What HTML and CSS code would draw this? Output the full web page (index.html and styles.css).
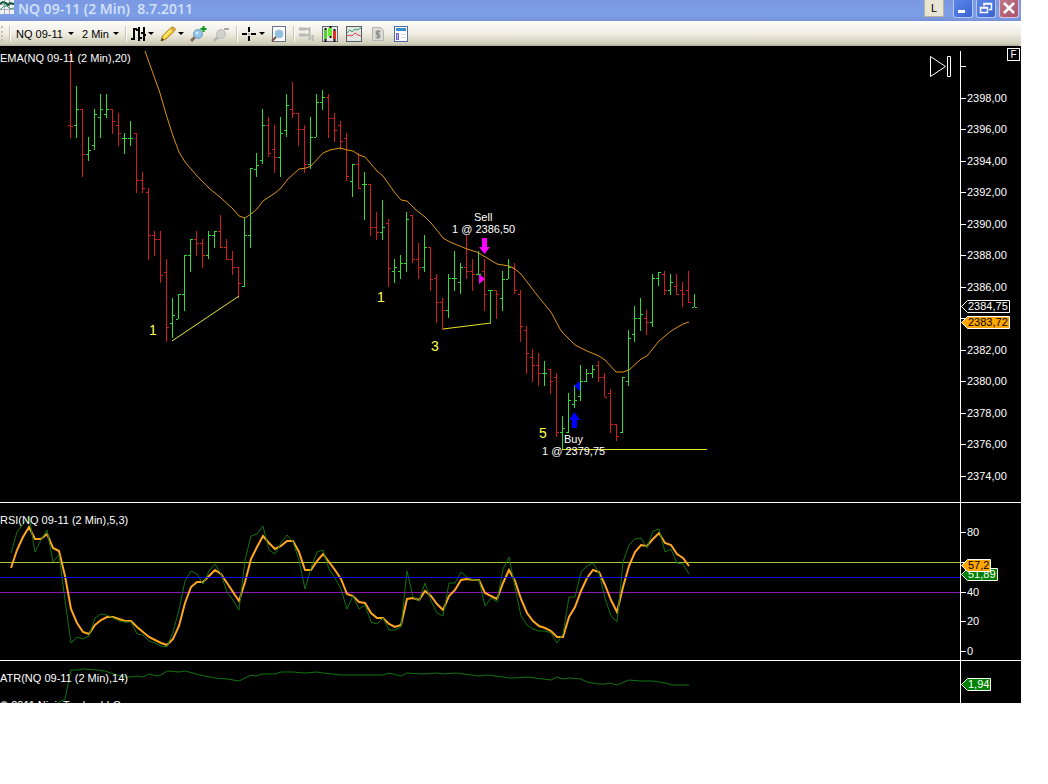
FILE: index.html
```html
<!DOCTYPE html>
<html lang="en">
<head>
    <meta charset="UTF-8">
    <meta name="viewport" content="width=device-width, initial-scale=1.0">
    <title>NQ 09-11 (2 Min) 8.7.2011</title>
    <link rel="stylesheet" href="styles.css">
</head>
<body>
    <div class="window">
        <header class="title-bar">
            <svg class="app-icon" width="14" height="14" viewBox="0 0 14 14">
                <rect width="14" height="14" fill="#eef2f0"/>
                <path d="M0 4.5h14M0 9.5h14M4.5 0v14M9.5 0v14" stroke="#b9a7bd"/>
                <path d="M0 4l3-2 3 1 2 2 2-2 4 1" fill="none" stroke="#0c5a3c" stroke-width="2"/>
                <path d="M0 10l4-4 3 0 3 3 4-1" fill="none" stroke="#2a9a6a"/>
            </svg>
            <h1 class="title">NQ 09-11 (2 Min)&nbsp; 8.7.2011</h1>
            <button class="link-button" type="button">L</button>
            <div class="window-buttons">
                <button class="win-button" type="button" aria-label="Minimize">
                    <svg width="18" height="18"><path d="M4 12.5h7" stroke="#fff" stroke-width="3"/></svg>
                </button>
                <button class="win-button" type="button" aria-label="Restore">
                    <svg width="18" height="18"><path d="M7 7V4.500h7.500v6H12M7 5h7M3.500 8.500h7v5h-7zM4 9h6" fill="none" stroke="#fff" stroke-width="1.500"/></svg>
                </button>
                <button class="win-button close" type="button" aria-label="Close">
                    <svg width="18" height="18"><path d="M4 4l10 10M14 4L4 14" stroke="#fff" stroke-width="2.500"/></svg>
                </button>
            </div>
        </header>

        <div class="toolbar">
            <span class="grip"></span>
            <span class="separator"></span>
            <label class="picker instrument">
                <select aria-label="Instrument"><option>NQ 09-11</option></select>
                <svg class="caret" width="6" height="4"><path d="M0 0h6L3 3z"/></svg>
            </label>
            <label class="picker period">
                <select aria-label="Period"><option>2 Min</option></select>
                <svg class="caret" width="6" height="4"><path d="M0 0h6L3 3z"/></svg>
            </label>
            <span class="separator"></span>
            <button class="tool" type="button" aria-label="Chart style">
                <svg width="16" height="16"><path d="M4 2v12M1 13h3M4 3h3M9 1v14M6 4h3M9 12h3M14 1v14M11 7h3M14 9h2" fill="none" stroke="#000" stroke-width="2"/></svg>
                <svg class="caret" width="6" height="4"><path d="M0 0h6L3 3z"/></svg>
            </button>
            <button class="tool wide" type="button" aria-label="Drawing tools">
                <svg width="16" height="16"><path d="M1 15l1.500-5L11 1.500q2-1 3.500.5t0 3L6 13z" fill="#f4d02c" stroke="#a8791c"/><path d="M4 11l8-8" stroke="#fff08c" stroke-width="1.500"/><path d="M11 2l3 3" stroke="#d8a04a" stroke-width="2"/><path d="M1 15l1-3 2 2z" fill="#333"/></svg>
                <svg class="caret" width="6" height="4"><path d="M0 0h6L3 3z"/></svg>
            </button>
            <button class="tool wide" type="button" aria-label="Zoom in">
                <svg width="17" height="16"><path d="M1 15l4-4" stroke="#8a6a5a" stroke-width="3"/><circle cx="8" cy="8" r="4.500" fill="#8fc4e8" stroke="#7d9fc0"/><circle cx="7" cy="7" r="1.500" fill="#d4ecfa"/><path d="M13.500 0v6M10.500 3h6" stroke="#0a9a20" stroke-width="2"/></svg>
            </button>
            <button class="tool wide" type="button" aria-label="Zoom out" disabled>
                <svg width="17" height="16"><path d="M1 15l4-4" stroke="#b4b4b0" stroke-width="3"/><circle cx="8" cy="8" r="4.500" fill="#d0d0cc" stroke="#bcbcb8"/><path d="M11 3h5" stroke="#a8a8a4" stroke-width="2"/></svg>
            </button>
            <span class="separator"></span>
            <button class="tool" type="button" aria-label="Cursor">
                <svg width="16" height="16"><path d="M1 8h5M10 8h5M8 1v5M8 10v5" stroke="#000" stroke-width="2"/><path d="M7.500 8h1" stroke="#000"/></svg>
                <svg class="caret" width="6" height="4"><path d="M0 0h6L3 3z"/></svg>
            </button>
            <button class="tool wide" type="button" aria-label="Data box">
                <svg width="16" height="16"><rect x="1.500" y=".5" width="13" height="15" fill="#fafafa" stroke="#6b7686"/><circle cx="8" cy="8" r="4" fill="#8fc0e4" stroke="#a9c4dc"/><path d="M1 15l4-4" stroke="#7a5040" stroke-width="2"/></svg>
            </button>
            <span class="separator"></span>
            <button class="tool" type="button" aria-label="Chart trader" disabled>
                <svg width="16" height="16"><path d="M1 3h7M1 9h7" stroke="#b8b8b4" stroke-width="3"/><path d="M8 3h3M8 9h3M14.500 9v6M11.500 1v13" stroke="#b8b8b4" stroke-width="2"/></svg>
            </button>
            <button class="tool spaced" type="button" aria-label="Data series">
                <svg width="16" height="16"><rect x=".5" y=".5" width="15" height="15" fill="#e8e8e4" stroke="#667"/><path d="M3.500 2v14M8.500 0v12M12.500 3v13" stroke="#111" stroke-width="2"/><path d="M2 4h3v9H2z" fill="#4ed32a"/><path d="M6 2h4v8H6z" fill="#6ae838"/><path d="M11 5h3v8h-3z" fill="#e03020"/></svg>
            </button>
            <button class="tool spaced" type="button" aria-label="Indicators">
                <svg width="16" height="16"><rect x=".5" y=".5" width="15" height="15" fill="#e2e6e2" stroke="#556068"/><path d="M1 7l3-3 2 2 3-3 2 1 4-2" fill="none" stroke="#3aa070"/><path d="M1 10l3-1 2 1 3-3 3 2 3 1" fill="none" stroke="#e04048"/></svg>
            </button>
            <button class="tool spaced" type="button" aria-label="Strategies" disabled>
                <svg width="16" height="16"><path d="M2.500 1.500h8l3 3v10h-11z" fill="#dcdcd8" stroke="#b4b4b0"/><path d="M10.500 5.500h-4v3h3v3h-4M8 4v9" fill="none" stroke="#94948f" stroke-width="1.500"/></svg>
            </button>
            <button class="tool spaced" type="button" aria-label="Properties">
                <svg width="16" height="16"><rect x=".5" y=".5" width="13" height="15" fill="#fff" stroke="#4c6ea0"/><path d="M2 3.500h10" stroke="#3f8ccc" stroke-width="3"/><rect x="2.500" y="7.500" width="2" height="6" fill="#b8b0f8" stroke="#7064d8"/><path d="M7 8.500h5M7 11.500h5" stroke="#d8d8d8"/></svg>
            </button>
        </div>

        <main class="chart">
            <section class="panel price">
                <h2 class="panel-label">EMA(NQ 09-11 (2 Min),20)</h2>
                <svg class="plot" id="price-plot"></svg>
                <svg class="axis" id="price-axis"></svg>
                <button class="go-last" type="button" aria-label="Go to last bar">
                    <svg width="22" height="22"><path d="M.5 .5v20l15-10zM17.500 .5h3v20h-3z" fill="none" stroke="#fff"/></svg>
                </button>
                <button class="fixed-scale" type="button">F</button>
            </section>
            <section class="panel rsi">
                <h2 class="panel-label">RSI(NQ 09-11 (2 Min),5,3)</h2>
                <svg class="plot" id="rsi-plot"></svg>
                <svg class="axis" id="rsi-axis"></svg>
            </section>
            <section class="panel atr">
                <h2 class="panel-label">ATR(NQ 09-11 (2 Min),14)</h2>
                <svg class="plot" id="atr-plot"></svg>
                <svg class="axis" id="atr-axis"></svg>
                <p class="copyright">© 2011 NinjaTrader, LLC</p>
            </section>
        </main>
    </div>
    <script src="chart.js"></script>
</body>
</html>
```

FILE: styles.css
```css
body {
    margin: 0;
    background: #fff;
    font-family: "Liberation Sans", Arial, sans-serif;
    font-size: 11px;
}
button {
    padding: 0;
    border: 0;
    background: none;
    font: inherit;
}
.window {
    margin-right: 27px;
}

/* title bar */
.title-bar {
    display: flex;
    align-items: flex-start;
    height: 21px;
    overflow: hidden;
    background: linear-gradient(#7b98e2, #7c9fe6 70%, #7690da);
}
.title {
    flex: 1;
    margin: 0 0 0 4px;
    color: #d5e2fb;
    font: 600 14px/17px "Open Sans", sans-serif;
}
.link-button {
    width: 20px;
    height: 17px;
    margin-right: 9px;
    border: 1px solid #b8b49c;
    border-top: 0;
    background: #e9e5d6;
    color: #000;
}
.window-buttons {
    display: flex;
    gap: 3px;
    margin-right: 2px;
}
.win-button {
    width: 20px;
    height: 18px;
    overflow: hidden;
    border: 1px solid #b4c6f4;
    border-top: 0;
    border-radius: 0 0 3px 3px;
    background: linear-gradient(135deg, #5c86e8, #3a63d2);
}
.win-button.close {
    border-color: #dcc0d4;
    background: linear-gradient(135deg, #c07888, #a85068);
}
.win-button svg {
    display: block;
    margin-top: -1px;
}

/* toolbar */
.toolbar {
    display: flex;
    align-items: center;
    height: 25px;
    background: linear-gradient(#fdfdfb, #efede2 50%, #cfccb8 92%, #a9a893);
    border-radius: 0 3px 3px 0;
}
.grip {
    width: 3px;
    height: 15px;
    border-right: 2px dotted #c4c0ac;
    box-sizing: border-box;
}
.separator {
    width: 1px;
    height: 16px;
    margin: 0 3px 0 6px;
    background: #c9c6b6;
    border-right: 1px solid #fff;
}
.picker {
    display: flex;
    align-items: center;
}
.picker select {
    appearance: none;
    width: 52px;
    padding: 0;
    border: 0;
    background: none;
    color: #000;
    font: inherit;
}
.picker.instrument {
    margin-left: 2px;
}
.picker.period {
    margin-left: 8px;
}
.picker.period select {
    width: 31px;
}
.tool {
    display: flex;
    align-items: center;
    gap: 2px;
}
.tool.wide {
    margin-left: 6px;
}
.tool.spaced {
    margin-left: 8px;
}

/* chart */
.chart {
    background: #000;
    color: #fff;
}
.panel {
    position: relative;
    display: flex;
    overflow: hidden;
    border-bottom: 1px solid #fff;
}
.panel.price {
    height: 456px;
}
.panel.rsi {
    height: 157px;
}
.panel.atr {
    height: 42px;
    border-bottom: 0;
}
.plot {
    flex: 1;
    min-width: 0;
    height: 100%;
}
.axis {
    flex: none;
    width: 61px;
    height: 100%;
}
.panel-label {
    position: absolute;
    top: 11px;
    left: 0;
    margin: 0;
    font-size: 11px;
    font-weight: normal;
    line-height: 13px;
}
.price .panel-label {
    top: 6px;
}
.go-last {
    position: absolute;
    top: 10px;
    right: 69px;
    height: 22px;
}
.fixed-scale {
    position: absolute;
    top: 2px;
    right: 1px;
    width: 13px;
    height: 13px;
    border: 1px solid #fff;
    color: #fff;
    font-size: 10px;
    line-height: 11px;
}
.copyright {
    position: absolute;
    top: 38px;
    left: 0;
    margin: 0;
    line-height: 13px;
}

.bar {
    fill: none;
    shape-rendering: crispEdges;
}
.up {
    stroke: #2fdc2f;
}
.down {
    stroke: #d01c1c;
}
.ema {
    fill: none;
    stroke: #dc9614;
}
.trend {
    stroke: #e6e62c;
}
.wave {
    fill: #ffff50;
    font-size: 14px;
}
.order {
    fill: #fff;
}
.sell {
    fill: #ff00ff;
}
.buy {
    fill: #0000ff;
}
.rsi-fast, .atr-line {
    fill: none;
    stroke: #107410;
}
.rsi-slow {
    fill: none;
    stroke: #ffa51e;
    stroke-width: 2;
}
.level, .axis-line {
    shape-rendering: crispEdges;
}
.level.high {
    stroke: #a2c83c;
}
.level.mid {
    stroke: #1010dc;
}
.level.low {
    stroke: #8c14b4;
}
.axis-line {
    fill: none;
    stroke: #fff;
}
.axis-text {
    fill: #fff;
}
.tag {
    stroke: #fff;
}
.tag.last {
    fill: #000;
}
.tag.orange {
    fill: #ffa500;
}
.tag.green {
    fill: #008000;
}
.tag-text {
    fill: #fff;
}
.tag-text.orange {
    fill: #000;
}
```

FILE: chart.js
```js
// values are stored in thirds of a pixel, measured from the top of the panel
var UNIT = 3;
var BAR_STEP = 6;

// each group: offset added to every value, then [high, low, open, close]
var barGroups = [
    { offset: 0, bars: [
        [15,275,238,238.5],[120,275,238,190],[190,392,190,323],[273,344,323,311],[190,311,297,203],
        [144,275,214,190],[144,215,203,190],[190,263,190,226],[201,299,238,262],[262,323,275,275],
        [226,299,275,275],[262,440,262,403],[378,440,403,427],[427,641,439,568],[556,629,568,580],
        [556,710,580,686],[640,887,677,842],[757,875,830,806],[745,818,818,745],[628,794,745,628],
        [580,677,628,580],[556,629,580,592],[580,665,592,628],[556,640,628,568],[556,605,568,556],
        [507,605,556,604],[580,641,604,640],[616,686,640,664],[663,757,663,710],[517,722,721,568],
        [367,605,568,367]
    ] },
    { offset: 72, bars: [
        [250,320,296,284],[117,283,271,166],[142,260,166,250],[165,310,238,260],[142,320,260,190],
        [72,202,179,106],[35,143,118,130],[129,227,130,178],[165,308,178,283],[142,297,283,202],
        [72,202,202,95],[60,119,95,82],[72,203,82,143],[129,215,143,179],[153,239,166,214],
        [189,332,203,319],[283,380,332,283],[250,356,283,355],[307,450,343,343],[343,497,343,472],
        [427,509,472,485],[391,509,485,472],[447,650,460,593],[567,638,604,592],[556,626,604,580],
        [427,605,580,448],[436,580,436,568],[518,626,568,592],[495,605,592,532],[532,662,532,626]
    ] },
    { offset: 462, bars: [
        [222,368,235,307],[295,390,307,331],[222,355,331,235],[153,272,235,235],[188,283,247,202],
        [105,236,202,213],[177,272,213,222],[153,224,222,222],[177,332,213,283],[271,370,271,271],
        [271,357,271,283],[213,332,295,236],[177,236,236,200]
    ] },
    { offset: 612, bars: [
        [38,133,50,121],[120,276,133,229],[228,371,240,310],[297,395,322,346],[310,407,346,370],
        [333,407,370,370],[357,431,357,394],[370,560,382,547],[498,597,547,535],[430,548,547,451],
        [406,475,463,451],[345,452,439,394],[357,395,394,370],[345,383,370,357],[333,395,346,382],
        [370,440,382,440],[417,548,430,523],[523,573,523,559],[382,548,547,382],[240,407,394,263],
        [168,276,253,205],[144,243,205,193],[179,254,205,217],[72,230,217,85],[65,109,85,65],
        [64,134,73,121],[72,134,121,97],[72,134,109,133],[97,170,121,133],[64,158,121,157],
        [132,170,170,170]
    ] }
];

var rsiSlow = [
    203,150,110,80,118,118,103,145,153,228,328,370,396,401,376,361,351,351,358,364,
    364,382,396,410,419,428,434,418,377,310,261,245,246,229,211,221,249,275,303,245,
    178,141,109,130,146,139,122,124,155,209,209,182,163,185,210,238,283,288,306,310,
    338,354,354,373,382,376,296,294,299,274,288,313,329,289,271,241,236,240,240,278,
    288,296,250,209,243,298,338,363,377,385,394,412,410,350,322,272,234,211,217,256,
    301,337,262,198,156,136,139,116,100,130,136,163,174,199
];
var rsiFast = [
    158,95,72,48,157,120,90,187,165,300,430,410,416,408,354,343,344,353,364,367,
    367,402,406,424,429,437,442,395,330,243,214,223,252,212,193,223,276,300,330,180,
    107,103,79,151,163,130,104,125,180,266,205,156,150,206,235,268,328,289,328,315,
    367,371,355,391,391,380,213,290,303,249,302,338,347,250,249,215,230,240,240,317,
    294,306,208,171,262,347,376,386,393,394,399,430,403,292,291,217,199,188,218,295,
    348,365,185,135,118,113,143,94,87,156,147,190,191,223
];

var ema = "145,5 160,47 166,68 173,90 179,106 185,116 197,130 209,142 221,152 233,163 239,170 " +
    "245,172 251,168 257,163 263,155 275,147 281,142 287,134 299,123 306,122 311,120 323,107 " +
    "330,104 340,102 347,104 353,105 359,109 365,111 377,125 383,130 395,147 401,154 407,155 " +
    "415,163 425,171 431,177 440,188 443,192 450,196 467,203 477,206 487,212 497,218 509,220 " +
    "515,223 521,228 537,249 551,266 560,283 563,287 575,299 587,305 599,310 605,314 616,326 " +
    "623,326 629,324 641,313 647,310 659,295 671,285 683,278 689,276";

var atr = "58,42 65,38 71,9 77,9 83,8 97,9 105,10 117,14 125,16 131,16 137,15 143,16 149,13 " +
    "157,15 161,14 167,10 179,11 185,10 200,14 215,17 227,18 239,20 251,14 256,15 262,13 275,13 " +
    "281,11 293,11 305,12 317,11 323,12 341,14 370,14 383,14 389,12 401,15 407,12 423,13 437,12 " +
    "443,13 455,12 479,15 487,14 503,16 509,17 515,17 527,16 551,19 557,16 563,18 569,17 581,18 " +
    "587,21 599,23 605,23 610,22 617,24 629,19 640,20 653,20 665,22 673,24 689,24";

function line(x1, y1, x2, y2, cls) {
    return `<line x1="${x1}" y1="${y1}" x2="${x2}" y2="${y2}" class="${cls}"/>`;
}

function text(x, y, value, cls) {
    return `<text x="${x}" y="${y}" class="${cls}">${value}</text>`;
}

function polyline(points, cls) {
    return `<polyline points="${points}" class="${cls}"/>`;
}

function drawBars() {
    var out = "";
    var x = 70;
    barGroups.forEach(function(group) {
        group.bars.forEach(function(bar) {
            var y = bar.map(function(v) {
                return Math.round((v + group.offset) / UNIT);
            });
            var cls = bar[3] <= bar[2] ? "up" : "down";
            out += `<path class="bar ${cls}" d="M${x + 0.5} ${y[0]}V${y[1]}M${x - 2} ${y[2] + 0.5}H${x}M${x + 1} ${y[3] + 0.5}H${x + 3}"/>`;
            x += BAR_STEP;
        });
    });
    return out;
}

function seriesPoints(values) {
    return values.map(function(v, i) {
        return (11 + i * BAR_STEP) + "," + Math.round(v / UNIT - 3);
    }).join(" ");
}

function axisTicks(ticks) {
    return ticks.map(function(t) {
        return line(1, t[0] + 0.5, 6, t[0] + 0.5, "axis-line") + text(7, t[0] + 4, t[1], "axis-text");
    }).join("");
}

function tag(y, width, value, color) {
    return `<path class="tag ${color}" d="M1.5 ${y + 0.5}l6-6H${width + 0.5}v12H7.5z"/>` +
        text(8, y + 4, value, "tag-text " + color);
}

document.getElementById("price-plot").innerHTML =
    drawBars() +
    polyline(ema, "ema") +
    line(172, 295, 239, 250, "trend") +
    line(443, 283, 491, 277, "trend") +
    line(562, 403.5, 707, 403.5, "trend") +
    text(149, 289, "1", "wave") +
    text(377, 256, "1", "wave") +
    text(431, 305, "3", "wave") +
    text(539, 392, "5", "wave") +
    text(474, 175, "Sell", "order") +
    text(452, 187, "1 @ 2386,50", "order") +
    text(564, 397, "Buy", "order") +
    text(542, 409, "1 @ 2379,75", "order") +
    '<path class="sell" d="M482 192h5v9h3l-5.500 7-5.500-7h3zM479 228l6 5-6 5z"/>' +
    '<path class="buy" d="M572 382h5v-8h3l-5.500-8-5.500 8h3zM580 335l-6 5 6 5z"/>';

document.getElementById("price-axis").innerHTML =
    line(0.5, 5, 0.5, 456, "axis-line") +
    axisTicks([
        [20, ""], [52, "2398,00"], [83, "2396,00"], [115, "2394,00"], [146, "2392,00"],
        [178, "2390,00"], [209, "2388,00"], [241, "2386,00"], [272, ""], [304, "2382,00"],
        [335, "2380,00"], [367, "2378,00"], [398, "2376,00"], [430, "2374,00"]
    ]) +
    tag(260, 49, "2384,75", "last") +
    tag(276, 49, "2383,72", "orange");

document.getElementById("rsi-plot").innerHTML =
    line(0, 59.5, "100%", 59.5, "level high") +
    line(0, 89.5, "100%", 89.5, "level low") +
    polyline(seriesPoints(rsiSlow), "rsi-slow") +
    polyline(seriesPoints(rsiFast), "rsi-fast") +
    line(0, 74.5, "100%", 74.5, "level mid");

document.getElementById("rsi-axis").innerHTML =
    line(0.5, 0, 0.5, 157, "axis-line") +
    axisTicks([[29, "80"], [59, ""], [89, "40"], [118, "20"], [148, "0"]]) +
    tag(71, 37, "51,89", "green") +
    tag(62, 30, "57,2", "orange");

document.getElementById("atr-plot").innerHTML = polyline(atr, "atr-line");

document.getElementById("atr-axis").innerHTML =
    line(0.5, 0, 0.5, 42, "axis-line") +
    tag(23, 30, "1,94", "green");
```
